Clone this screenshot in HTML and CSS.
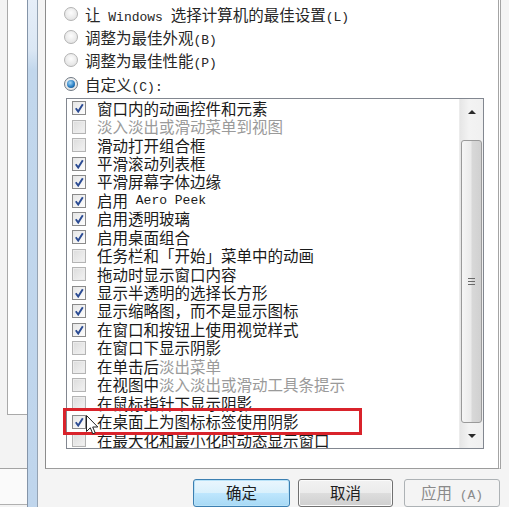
FILE: index.html
```html
<!DOCTYPE html>
<html lang="zh-CN">
<head>
  <meta charset="UTF-8" />
  <meta name="viewport" content="width=device-width, initial-scale=1.0" />
  <title>性能选项</title>
  <link rel="stylesheet" href="styles.css">
</head>
<body>
  <div class="screen">
    <div class="bgwin">
      <div class="bg-panel"></div>
      <div class="bg-mid"></div>
      <div class="bg-low"></div>
    </div>
    <div class="frame"></div>

    <div class="dialog">
      <div class="page">
        <div class="radios">
          <div class="radio"><span class="dot"></span><span>让<span class="lat"> Windows </span>选择计算机的最佳设置<span class="lat">(L)</span></span></div>
          <div class="radio"><span class="dot"></span><span>调整为最佳外观<span class="lat">(B)</span></span></div>
          <div class="radio"><span class="dot"></span><span>调整为最佳性能<span class="lat">(P)</span></span></div>
          <div class="radio checked"><span class="dot"></span><span>自定义<span class="lat">(C):</span></span></div>
        </div>

        <div class="listbox">
          <div class="items">
            <div class="item on"><span class="box"><svg viewBox="0 0 10 10"><path d="M1.8 5.2 L4.2 8.6 L8.8 1.2"/></svg></span>窗口内的动画控件和元素</div>
            <div class="item"><span class="box"></span><span class="faded">淡入淡出或滑动菜单到视图</span></div>
            <div class="item"><span class="box"></span>滑动打开组合框</div>
            <div class="item on"><span class="box"><svg viewBox="0 0 10 10"><path d="M1.8 5.2 L4.2 8.6 L8.8 1.2"/></svg></span>平滑滚动列表框</div>
            <div class="item on"><span class="box"><svg viewBox="0 0 10 10"><path d="M1.8 5.2 L4.2 8.6 L8.8 1.2"/></svg></span>平滑屏幕字体边缘</div>
            <div class="item on"><span class="box"><svg viewBox="0 0 10 10"><path d="M1.8 5.2 L4.2 8.6 L8.8 1.2"/></svg></span>启用<span class="lat"> Aero Peek</span></div>
            <div class="item on"><span class="box"><svg viewBox="0 0 10 10"><path d="M1.8 5.2 L4.2 8.6 L8.8 1.2"/></svg></span>启用透明玻璃</div>
            <div class="item on"><span class="box"><svg viewBox="0 0 10 10"><path d="M1.8 5.2 L4.2 8.6 L8.8 1.2"/></svg></span>启用桌面组合</div>
            <div class="item"><span class="box"></span>任务栏和「开始」菜单中的动画</div>
            <div class="item"><span class="box"></span>拖动时显示窗口内容</div>
            <div class="item on"><span class="box"><svg viewBox="0 0 10 10"><path d="M1.8 5.2 L4.2 8.6 L8.8 1.2"/></svg></span>显示半透明的选择长方形</div>
            <div class="item on"><span class="box"><svg viewBox="0 0 10 10"><path d="M1.8 5.2 L4.2 8.6 L8.8 1.2"/></svg></span>显示缩略图，而不是显示图标</div>
            <div class="item on"><span class="box"><svg viewBox="0 0 10 10"><path d="M1.8 5.2 L4.2 8.6 L8.8 1.2"/></svg></span>在窗口和按钮上使用视觉样式</div>
            <div class="item"><span class="box"></span>在窗口下显示阴影</div>
            <div class="item"><span class="box"></span>在单击后<span class="faded">淡出菜单</span></div>
            <div class="item"><span class="box"></span>在视图中<span class="faded">淡入淡出或滑动工具条提示</span></div>
            <div class="item"><span class="box"></span>在鼠标指针下显示阴影</div>
            <div class="item on"><span class="box"><svg viewBox="0 0 10 10"><path d="M1.8 5.2 L4.2 8.6 L8.8 1.2"/></svg></span>在桌面上为图标标签使用阴影</div>
            <div class="item"><span class="box"></span>在最大化和最小化时动态显示窗口</div>
          </div>
          <div class="scrollbar">
            <div class="sb-up"><span class="arrow-up"></span></div>
            <div class="sb-thumb"><span class="grip"></span></div>
            <div class="sb-down"><span class="arrow-down"></span></div>
          </div>
        </div>
      </div>

      <div class="buttons">
        <button class="btn default">确定</button>
        <button class="btn cancel">取消</button>
        <button class="btn apply" disabled>应用<span class="lat"> (A)</span></button>
      </div>
    </div>

    <!-- overlays from the recording -->
    <div class="highlight"></div>
    <svg class="cursor" width="13" height="21" viewBox="0 0 13 21">
      <path d="M0.5 0.5 L0.5 16.5 L4.3 12.8 L6.8 18.8 L9.2 17.8 L6.7 12 L11.8 12 Z" fill="#fff" stroke="#222" stroke-width="1"/>
    </svg>
  </div>
</body>
</html>
```

FILE: styles.css
```css
body {
  margin: 0;
  background-color: #f4f4f4;
  font-family: "Noto Sans CJK SC", "Liberation Sans", sans-serif;
  font-size: 15.5px;
  color: #1a1a1a;
}

.screen {
  position: relative;
  width: 509px;
  height: 507px;
  overflow: hidden;
  display: flex;
}

.lat {
  font-family: "Liberation Mono", monospace;
  font-size: 13px;
  white-space: pre;
}

/* window behind the dialog */
.bgwin {
  width: 27px;
  display: flex;
  flex-direction: column;
  background-color: #f3f3f3;
}

.bg-panel {
  height: 414px;
  margin-left: 7px;
  background-color: #fff;
  border-left: 1px solid #a9a9a9;
  border-bottom: 1px solid #a9a9a9;
}

.bg-mid {
  height: 53px;
  border-bottom: 1px solid #a3a3a3;
}

.bg-low {
  height: 35px;
  background-color: #fafafa;
  border-bottom: 1px solid #b0b0b0;
}

/* blue window border */
.frame {
  width: 9px;
  border-left: 1px solid #8494a8;
  border-right: 1px solid #95a3b3;
  background: linear-gradient(#e6eef8 0, #dbe7f4 50px, #c2d7ec 70px, #bfd5ec 100%);
}

.dialog {
  flex: 1;
  display: flex;
  flex-direction: column;
  padding-left: 7px;
  background-color: #f4f4f4;
}

.page {
  width: 452px;
  height: 468px;
  background-color: #fff;
  border-left: 1px solid #8c8c8c;
  border-right: 3px double #a4a4a4;
  border-bottom: 1px solid #9c9c9c;
}

.radios {
  padding: 2px 0 0 18px;
}

.radio {
  height: 23.3px;
  display: flex;
  align-items: center;
  gap: 7px;
  color: #262626;
}

.dot {
  width: 12px;
  height: 12px;
  border-radius: 50%;
  border: 1px solid #b3b3b3;
  background: radial-gradient(circle at 50% 40%, #fdfdfd, #dcdcdc);
  display: flex;
  align-items: center;
  justify-content: center;
}

.radio.checked .dot {
  border-color: #6f7984;
}

.radio.checked .dot::after {
  content: "";
  width: 8px;
  height: 8px;
  border-radius: 50%;
  background: radial-gradient(circle at 40% 35%, #a6d8f7, #2a7fc4 55%, #0d3f70);
}

.listbox {
  margin: 3px 0 0 20px;
  width: 416px;
  height: 349px;
  border: 1px solid #828790;
  display: flex;
  overflow: hidden;
}

.items {
  flex: 1;
  overflow: hidden;
}

.item {
  height: 18.45px;
  display: flex;
  align-items: center;
  white-space: nowrap;
  line-height: 1;
}

.box {
  width: 12px;
  height: 12px;
  margin: 0 11px 0 5px;
  border: 1px solid #b4b4b4;
  background: linear-gradient(135deg, #dcdcdc, #f3f3f3);
  box-shadow: inset 0 0 0 1px #ececec;
  display: flex;
  align-items: center;
  justify-content: center;
  flex-shrink: 0;
}

.item.on .box {
  border-color: #8a8a8a;
  background: linear-gradient(135deg, #e6e6e6, #fdfdfd);
  box-shadow: none;
}

.box svg {
  width: 10px;
  height: 10px;
}

.box svg path {
  fill: none;
  stroke: #2b4b93;
  stroke-width: 1.9;
}

.faded {
  color: #9a9a9a;
}

.scrollbar {
  width: 23px;
  display: flex;
  flex-direction: column;
  background: linear-gradient(to right, #e6e6e6, #f3f3f3 40%, #f0f0f0);
  border-left: 1px solid #ececec;
}

.sb-up {
  height: 41px;
  display: flex;
  justify-content: center;
  padding-top: 11px;
  box-sizing: border-box;
}

.arrow-up {
  width: 0;
  height: 0;
  border-left: 4px solid transparent;
  border-right: 4px solid transparent;
  border-bottom: 4px solid #2a2a2a;
}

.sb-thumb {
  height: 283px;
  margin: 0 1px 0 1px;
  border: 1px solid #9a9a9a;
  border-radius: 3px;
  box-sizing: border-box;
  background: linear-gradient(to right, #f6f6f6, #ebebeb 45%, #d8d8d8 55%, #d0d0d0);
  display: flex;
  align-items: center;
  justify-content: center;
}

.grip {
  width: 7px;
  height: 7px;
  background: repeating-linear-gradient(#6a6a6a 0, #6a6a6a 1px, transparent 1px, transparent 3px);
}

.sb-down {
  flex: 1;
  display: flex;
  align-items: center;
  justify-content: center;
}

.arrow-down {
  width: 0;
  height: 0;
  border-left: 4px solid transparent;
  border-right: 4px solid transparent;
  border-top: 4px solid #2a2a2a;
}

.buttons {
  display: flex;
  justify-content: flex-end;
  padding: 10px 9px 0 0;
}

.btn {
  height: 28px;
  margin-left: 9px;
  border-radius: 3px;
  font-family: "Noto Sans CJK SC", sans-serif;
  font-size: 15.5px;
  color: #1e1e1e;
  padding: 0;
  line-height: 1;
}

.btn.default {
  width: 97px;
  margin-left: 0;
  border: 1px solid #3c7fb1;
  background: linear-gradient(#eaf6fd, #d9f0fc 50%, #bee6fd 51%, #a7d9f5);
  box-shadow: inset 0 0 0 1px #b8e2f8;
}

.btn.cancel {
  width: 95px;
  margin-left: 8px;
  border: 1px solid #707070;
  background: linear-gradient(#f2f2f2, #ebebeb 50%, #dddddd 51%, #cfcfcf);
  box-shadow: inset 0 0 0 1px #fbfbfb;
}

.btn.apply {
  width: 96px;
  margin-left: 11px;
  border: 1px solid #adb2b5;
  background-color: #f4f4f4;
  color: #8a8a8a;
}

.highlight {
  position: absolute;
  left: 63px;
  top: 408px;
  width: 293px;
  height: 21px;
  border: 3px solid #d9232b;
}

.cursor {
  position: absolute;
  left: 86px;
  top: 415px;
}
```
